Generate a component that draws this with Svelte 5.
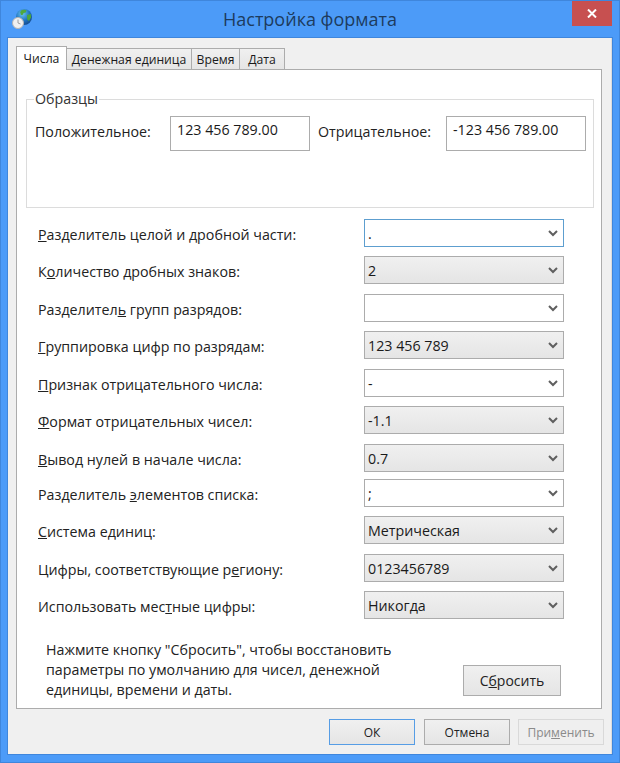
<script>
  const rows = [
    { before: '', key: 'Р', after: 'азделитель целой и дробной части:', value: '.', kind: 'focus', gap: 0 },
    { before: 'К', key: 'о', after: 'личество дробных знаков:', value: '2', kind: 'grey', gap: 9 },
    { before: 'Разделител', key: 'ь', after: ' групп разрядов:', value: '', kind: 'white', gap: 10 },
    { before: '', key: 'Г', after: 'руппировка цифр по разрядам:', value: '123 456 789', kind: 'grey', gap: 9 },
    { before: '', key: 'П', after: 'ризнак отрицательного числа:', value: '-', kind: 'white', gap: 10 },
    { before: '', key: 'Ф', after: 'ормат отрицательных чисел:', value: '-1.1', kind: 'grey', gap: 9 },
    { before: '', key: 'В', after: 'ывод нулей в начале числа:', value: '0.7', kind: 'grey', gap: 10 },
    { before: 'Разделитель ', key: 'э', after: 'лементов списка:', value: ';', kind: 'white', gap: 7 },
    { before: '', key: 'С', after: 'истема единиц:', value: 'Метрическая', kind: 'grey', gap: 9 },
    { before: 'Цифры, соответствующие р', key: 'е', after: 'гиону:', value: '0123456789', kind: 'grey', gap: 10 },
    { before: 'Использовать мес', key: 'т', after: 'ные цифры:', value: 'Никогда', kind: 'grey', gap: 9 }
  ];
  const tabs = [
    { label: 'Денежная единица', width: 125 },
    { label: 'Время', width: 48 },
    { label: 'Дата', width: 45 }
  ];
</script>

<div class="window">
  <header class="titlebar">
    <svg class="app-icon" width="22" height="22" viewBox="0 0 22 22" aria-hidden="true">
      <defs>
        <radialGradient id="globe" cx="0.4" cy="0.3" r="0.8">
          <stop offset="0" stop-color="#6cc4f0" />
          <stop offset="0.55" stop-color="#1f74c0" />
          <stop offset="1" stop-color="#123f80" />
        </radialGradient>
      </defs>
      <circle cx="13" cy="9" r="8" fill="url(#globe)" />
      <path d="M10 2.500c2-1 4-1 5.500-.3l-.7 2.300-2.300.5-.5 1.800-2 .2-.8-2.500z" fill="#4fa83d" />
      <path d="M16 7l3.800-1 .2 3.500-2 3.500-1.800-1.500z" fill="#4ea63c" />
      <circle cx="7" cy="15" r="5.500" fill="#f0f0f0" stroke="#b4b4b4" />
      <path d="M7 11.500V15l2.500 1" fill="none" stroke="#8a8a8a" stroke-width="0.8" />
    </svg>
    <h1>Настройка формата</h1>
    <button class="close" aria-label="Закрыть">
      <svg width="10" height="9" viewBox="0 0 10 9"><path d="M1 0.500l8 8M9 0.500l-8 8" stroke="#fff" stroke-width="2" /></svg>
    </button>
  </header>

  <div class="client">
    <nav class="tabs">
      <span class="tab active">Числа</span>
      {#each tabs as tab}
        <span class="tab" style:width="{tab.width}px">{tab.label}</span>
      {/each}
    </nav>

    <section class="panel">
      <fieldset class="samples">
        <legend>Образцы</legend>
        <div class="sample-row">
          <span class="sample-label pos">Положительное:</span>
          <div class="sample-value">123 456 789.00</div>
          <span class="sample-label neg">Отрицательное:</span>
          <div class="sample-value">-123 456 789.00</div>
        </div>
      </fieldset>

      <div class="form">
        {#each rows as row}
          <div class="row" style:margin-top="{row.gap}px">
            <span class="label">{row.before}<u>{row.key}</u>{row.after}</span>
            <div class="combo {row.kind}">
              <span class="combo-value">{row.value}</span>
              <svg width="10" height="7" viewBox="0 0 10 7"><path d="M1 1l4 4 4-4" fill="none" stroke="#5f5f5f" stroke-width="2" /></svg>
            </div>
          </div>
        {/each}
      </div>

      <div class="reset-row">
        <p>Нажмите кнопку "Сбросить", чтобы восстановить параметры по умолчанию для чисел, денежной единицы, времени и даты.</p>
        <button class="btn reset">С<u>б</u>росить</button>
      </div>
    </section>

    <footer class="actions">
      <button class="btn default">ОК</button>
      <button class="btn">Отмена</button>
      <button class="btn disabled">При<u>м</u>енить</button>
    </footer>
  </div>
</div>

<style>
  :global(body) {
    margin: 0;
    background: #4c9bf8;
  }
  .window {
    box-sizing: border-box;
    width: 620px;
    height: 763px;
    border: 1px solid #3f86dc;
    background: #4c9bf8;
    font-family: "Open Sans", "Noto Sans", sans-serif;
    font-size: 14.25px;
    color: #1a1a1a;
    overflow: hidden;
  }
  .titlebar {
    display: grid;
    grid-template-columns: 1fr auto 1fr;
    height: 37px;
    align-items: start;
  }
  .app-icon {
    margin: 7px 0 0 10px;
  }
  h1 {
    margin: 6px 0 0;
    font-size: 18px;
    font-weight: 400;
    line-height: 25px;
    color: #1d3b5e;
  }
  .close {
    justify-self: end;
    width: 40px;
    height: 25px;
    margin: 0 7px 0 0;
    padding: 0;
    border: 0;
    background: #c75050;
    display: flex;
    align-items: center;
    justify-content: center;
  }
  .client {
    margin: 0 7px;
    height: 716px;
    background: #f0f0f0;
    padding: 8px 7px 0 8px;
    box-sizing: border-box;
    border-right: 1px solid #dcdcdc;
    box-shadow: 0 0 0 1px #3f86dc;
  }
  .tabs {
    display: flex;
    align-items: flex-end;
    height: 24px;
    position: relative;
    z-index: 1;
    margin-bottom: -1px;
  }
  .tab {
    box-sizing: border-box;
    height: 22px;
    border: 1px solid #acacac;
    border-left-width: 0;
    background: linear-gradient(#f0f0f0, #e5e5e5);
    line-height: 22px;
    font-size: 12.2px;
    text-align: center;
    white-space: nowrap;
  }
  .tab.active {
    height: 24px;
    width: 51px;
    background: #fff;
    border-width: 1px 1px 0 1px;
    line-height: 23px;
  }
  .panel {
    box-sizing: border-box;
    height: 640px;
    margin-right: 2px;
    background: #fff;
    border: 1px solid #acacac;
    padding: 0 7px 0 9px;
  }
  .samples {
    box-sizing: border-box;
    height: 118px;
    margin: 20px 0 0;
    padding: 0 7px 0 8px;
    border: 1px solid #dcdcdc;
    min-width: 0;
  }
  legend {
    margin-left: -1px;
    padding: 0 1px;
    line-height: 18px;
    color: #333;
  }
  .sample-row {
    display: flex;
    margin-top: 8px;
    align-items: flex-start;
  }
  .sample-label {
    line-height: 32px;
    white-space: nowrap;
    color: #222;
  }
  .sample-label.pos {
    width: 135px;
  }
  .sample-label.neg {
    width: 128px;
    margin-left: 8px;
  }
  .sample-value {
    box-sizing: border-box;
    width: 140px;
    height: 35px;
    border: 1px solid #acacac;
    padding: 3px 6px;
    line-height: 20px;
    white-space: nowrap;
  }
  .form {
    margin: 11px 0 0 0;
  }
  .row {
    display: flex;
    align-items: center;
    height: 28px;
    padding-left: 12px;
  }
  .label {
    width: 326px;
    padding-top: 2px;
    white-space: nowrap;
    color: #222;
  }
  .combo {
    box-sizing: border-box;
    width: 200px;
    height: 28px;
    border: 1px solid #acacac;
    display: flex;
    align-items: center;
    justify-content: space-between;
    padding: 0 5px 0 3px;
  }
  .combo.grey {
    background: linear-gradient(#f0f0f0, #e5e5e5);
  }
  .combo.focus {
    border-color: #5d9ecf;
  }
  .combo-value {
    white-space: nowrap;
  }
  .reset-row {
    display: flex;
    justify-content: space-between;
    align-items: flex-end;
    margin: 21px 0 0 20px;
    padding-right: 33px;
  }
  .reset-row p {
    width: 370px;
    margin: 0;
    line-height: 20px;
    color: #222;
  }
  .btn {
    box-sizing: border-box;
    width: 86px;
    height: 26px;
    padding: 0;
    border: 1px solid #acacac;
    background: linear-gradient(#f0f0f0, #e5e5e5);
    font: inherit;
    font-size: 12px;
    color: #222;
  }
  .btn.reset {
    width: 98px;
    height: 31px;
    font-size: 14px;
    margin-bottom: 4px;
  }
  .btn.default {
    border-color: #569de5;
    margin-right: 1px;
  }
  .btn.disabled {
    border-color: #d9d9d9;
    background: #efefef;
    color: #8a8a8a;
  }
  .actions {
    display: flex;
    justify-content: flex-end;
    gap: 8px;
    margin-top: 10px;
  }
</style>
